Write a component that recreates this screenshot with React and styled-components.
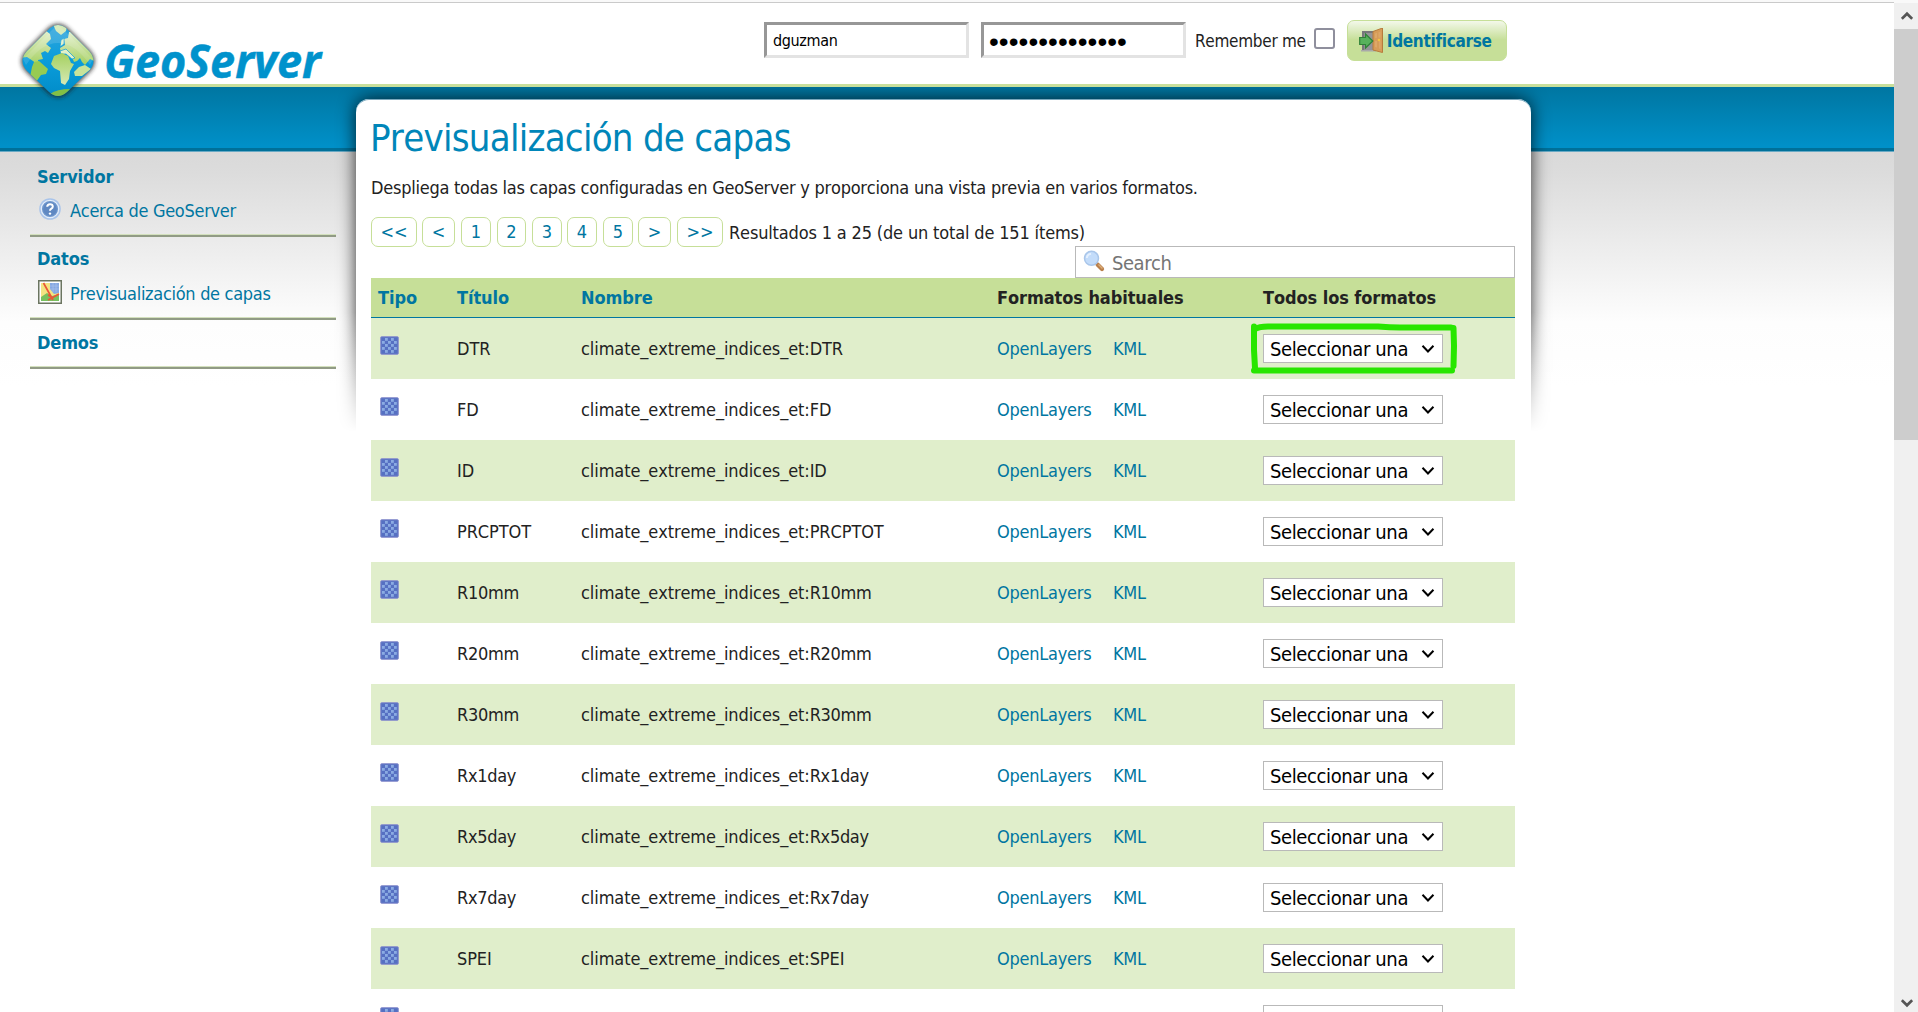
import React from "react";
import styled, { createGlobalStyle, css } from "styled-components";

const GlobalStyle = createGlobalStyle`
  *, *::before, *::after { box-sizing: border-box; }
  body {
    margin: 0;
    overflow: hidden;
    background: #fff;
    color: #222;
    font: 18px/24px "DejaVu Sans Condensed", "Noto Sans", sans-serif;
    font-kerning: none;
    font-variant-ligatures: none;
  }
`;

const Page = styled.div`
  display: flex;
  width: 1918px;
  height: 1012px;
  overflow: hidden;
  background: #f9f9f9;
  padding-top: 2px;
`;

const Main = styled.div`
  flex: 1;
  display: flex;
  flex-direction: column;
  border-top: 1px solid #cacaca;
  background: #fff;
`;

const Header = styled.header`
  flex: none;
  display: flex;
  align-items: flex-start;
  height: 84px;
  border-bottom: 3px solid #c8df9b;
`;

const Logo = styled.svg`
  flex: none;
  position: relative;
  z-index: 1;
  width: 764px;
  height: 100px;
  overflow: visible;
`;

const LoginForm = styled.form`
  display: flex;
  align-items: center;
  height: 41px;
  margin-top: 17px;
`;

const Field = styled.div`
  width: 205px;
  height: 36px;
  margin: 0 12px 1px 0;
  padding: 0 6px;
  border: 3px solid;
  border-color: #979797 #e3e3e3 #e3e3e3 #979797;
  background: #fff;
  color: #000;
  font-size: 16px;
  line-height: 31px;
  letter-spacing: -0.35px;
  overflow: hidden;
  white-space: nowrap;
  ${(p) => p.$masked && css`
    font-family: "Liberation Sans", sans-serif;
    font-size: 28px;
    line-height: 33px;
    letter-spacing: 0.05px;
    margin-right: 9px;
    padding-left: 5px;
  `}
`;

const Remember = styled.label`
  display: flex;
  align-items: center;
  font-size: 17px;
  letter-spacing: -0.28px;
`;

const Check = styled.span`
  width: 21px;
  height: 21px;
  margin: 0 12px 4px 8px;
  border: 2px solid #8f8f9d;
  border-radius: 3px;
  background: #fff;
`;

const LoginButton = styled.div`
  display: flex;
  align-items: center;
  width: 160px;
  height: 41px;
  padding-left: 11px;
  gap: 3px;
  border: 1px solid #c6df98;
  border-radius: 7px;
  background: linear-gradient(#f3f8ea, #c6df98 48%);
  color: #0076a1;
  font-size: 17px;
  font-weight: 700;
  letter-spacing: -0.3px;
`;

const Body = styled.div`
  flex: 1;
  display: grid;
  grid-template-columns: 356px 1175px 1fr;
  background: linear-gradient(
      #0076a1 0, #0090c8 59px, #0090c8 61px, #007099 61px, #007099 64px,
      #69a9c4 64px, #69a9c4 65px, #d9d9d9 65px, #dcdcdc 86px, #fdfdfd 235px, #fff 300px
    );
`;

const Sidebar = styled.nav`
  padding: 68px 20px 0 30px;
`;

const Section = styled.section`
  padding: ${(p) => p.$top}px 0 12px 7px;
  border-bottom: 2px solid #919b85;
  box-shadow: inset 0 -1px #d3e0bd;
`;

const SectionTitle = styled.h3`
  margin: 0;
  color: #0076a1;
  font-size: 18px;
  line-height: 24px;
  font-weight: 700;
  letter-spacing: -0.15px;
`;

const MenuLink = styled.div`
  display: grid;
  grid-template-columns: 24px 1fr;
  column-gap: 9px;
  align-items: center;
  height: 24px;
  margin-top: ${(p) => p.$gap}px;
  color: #0076a1;
  letter-spacing: -0.3px;
  white-space: nowrap;

  svg { margin: -5px 0 0 1px; }
`;

const Panel = styled.main`
  position: relative;
  margin-top: 12px;
  padding: 16px 16px 0 15px;
`;

const Backdrop = styled.div`
  position: absolute;
  top: -12px;
  left: -24px;
  right: -24px;
  height: 356px;
  padding: 12px 24px 0;
  overflow: hidden;
  mask-image: linear-gradient(#000 225px, transparent 345px);
`;

const BackdropCard = styled.div`
  height: 420px;
  border-radius: 13px 13px 0 0;
  box-shadow: 0 0 18px rgba(0, 0, 0, 0.8);
`;

const Surface = styled.div`
  position: absolute;
  inset: 0;
  border-radius: 13px 13px 0 0;
  background: #fff;
  box-shadow: inset 0 1px #7aa8bd;
`;

const Content = styled.div`
  position: relative;
`;

const Title = styled.h1`
  margin: 0 0 0 -1px;
  color: #0086b9;
  font-size: 38px;
  line-height: 46px;
  font-weight: 400;
  letter-spacing: -0.74px;
`;

const Intro = styled.p`
  margin: 15px 0 17px;
  letter-spacing: -0.25px;
`;

const Pager = styled.div`
  display: flex;
  align-items: center;
  height: 30px;
  letter-spacing: -0.16px;
`;

const PageLink = styled.span`
  display: flex;
  align-items: center;
  justify-content: center;
  width: ${(p) => p.$w}px;
  height: 30px;
  margin-right: ${(p) => p.$gap}px;
  border: 1px solid #c6df98;
  border-radius: 7px;
  color: #0076a1;
  letter-spacing: 0;
`;

const Summary = styled.span`
  padding-top: 1px;
`;

const SearchBox = styled.div`
  display: flex;
  align-items: center;
  gap: 7px;
  width: 440px;
  height: 32px;
  margin: -1px 0 0 auto;
  padding: 1px 0 0 7px;
  border: 1px solid #b9b9b9;
  background: #fff;
  color: #757575;
  font-size: 20px;
  letter-spacing: -0.45px;

  svg { margin-top: -3px; }
`;

const rowGrid = css`
  display: grid;
  grid-template-columns: 79px 124px 416px 116px 150px 1fr;
  align-items: center;
  padding-left: 7px;
`;

const HeadRow = styled.div`
  ${rowGrid}
  height: 40px;
  background: #c6df98;
  border-bottom: 1px solid #0076a1;
  font-weight: 700;
  letter-spacing: -0.08px;
`;

const HeadCell = styled.div`
  color: ${(p) => (p.$link ? "#0076a1" : "#222")};
  grid-column: span ${(p) => p.$span || 1};
`;

const Row = styled.div`
  ${rowGrid}
  height: 61px;
  background: ${(p) => (p.$shaded ? "#e0eecb" : "#fff")};
  letter-spacing: -0.09px;
`;

const TypeCell = styled.div`
  display: flex;
  height: 26px;
  padding-left: 2px;
`;

const LayerName = styled.span`
  letter-spacing: ${(p) => (p.$tight ? "-0.3px" : "inherit")};
`;

const Link = styled.span`
  color: #0076a1;
  letter-spacing: -0.25px;
`;

const SelectWrap = styled.div`
  position: relative;
  width: 180px;
`;

const Select = styled.div`
  display: flex;
  align-items: center;
  justify-content: flex-end;
  gap: 13px;
  height: 29px;
  padding: 0 7px 0 6px;
  border: 1px solid #b9b9b9;
  background: #fff;
  color: #000;
  font-size: 20px;
  letter-spacing: -0.38px;
  white-space: nowrap;
`;

const Marker = styled.svg`
  position: absolute;
  left: -13px;
  top: -12px;
  width: 208px;
  height: 52px;
`;

const Scrollbar = styled.aside`
  display: flex;
  flex-direction: column;
  width: 24px;
  margin-top: 1px;
  background: #f0f0f0;
`;

const ScrollArrow = styled.div`
  display: flex;
  align-items: center;
  justify-content: center;
  height: 26px;
  padding-left: 1px;

  svg { transform: ${(p) => (p.$down ? "translateY(4px) scaleY(-1)" : "none")}; }
`;

const Thumb = styled.div`
  height: 411px;
  margin-bottom: auto;
  background: #cdcdcd;
`;

function GeoServerLogo() {
  return (
    <Logo viewBox="0 3 764 100" role="img" aria-label="GeoServer">
      <defs>
        <clipPath id="gem">
          <path d="M50 28 Q58 22 66 28 L89 51 Q98 61 89 71 L67 92 Q58 100 49 92 L27 71 Q18 61 27 51 Z" />
        </clipPath>
        <linearGradient id="sea" x1="0" y1="0" x2="0" y2="1">
          <stop offset="0" stopColor="#35a5dc" />
          <stop offset="0.5" stopColor="#0b9ddb" />
          <stop offset="1" stopColor="#008ac7" />
        </linearGradient>
        <linearGradient id="land" x1="0" y1="0" x2="0" y2="1">
          <stop offset="0" stopColor="#e3f0cf" />
          <stop offset="0.55" stopColor="#c2de92" />
          <stop offset="1" stopColor="#a3d05e" />
        </linearGradient>
        <linearGradient id="africa" x1="0" y1="0" x2="0" y2="1">
          <stop offset="0" stopColor="#a5d05f" />
          <stop offset="1" stopColor="#d6e9b5" />
        </linearGradient>
        <filter id="soft" x="-20%" y="-20%" width="140%" height="140%">
          <feGaussianBlur stdDeviation="2.2" />
        </filter>
      </defs>
      <path
        d="M50 28 Q58 22 66 28 L89 51 Q98 61 89 71 L67 92 Q58 100 49 92 L27 71 Q18 61 27 51 Z"
        fill="#222" stroke="#222" strokeWidth="2.5" opacity=".8" filter="url(#soft)"
      />
      <g clipPath="url(#gem)">
        <rect x="20" y="20" width="78" height="80" fill="url(#sea)" />
        <path d="M20 58 L45 30 L50 34 L51 39 L46 44 L51 48 L48 53 L45 51 L41 53 L43 59 L38 60 L39 66 L33 61 L27 57 Z" fill="url(#land)" />
        <path d="M34 62 L39 61 L48 69 L46 74 L41 75 L36 82 L30 77 L32 67 Z" fill="#97cb52" />
        <path d="M53 24 L67 26 L66 31 L61 35 L56 31 Z" fill="#d3e9b4" />
        <path d="M69 32 L73 32 L97 56 L94 61 L90 59 L85 65 L82 62 L80 58 L77 61 L74 62 L71 55 L65 53 L61 54 L60 48 L65 45 L64 39 L68 38 Z" fill="url(#land)" />
        <path d="M61 40 L64 38 L64 44 L60 47 Z M60 51 L66 49 L70 53 L75 58 L72 59 L66 54 L61 54 Z" fill="#e1f0c8" stroke="#0b9ddb" strokeWidth=".7" />
        <path d="M54 56 L62 53 L68 56 L71 63 L74 64 L70 71 L69 79 L65 85 L61 83 L60 71 L54 68 L51 64 Z" fill="url(#africa)" />
        <path d="M74 72 L79 67 L85 65 L91 69 L82 76 L75 76 Z" fill="#c8e39a" />
        <path d="M50 94 Q57 89 70 89 L65 98 L52 99 Z" fill="#83bf45" />
        <path d="M58 24 L93 59 L90 65 Q75 43 58 43 Q41 43 26 65 L23 59 Z" fill="#fff" opacity=".13" />
      </g>
      <text
        x="104" y="78" fill="#0092cc" stroke="#0092cc" strokeWidth=".5"
        fontFamily="'Open Sans', sans-serif" fontSize="47" fontWeight="700" fontStyle="italic"
        textLength="217" lengthAdjust="spacingAndGlyphs"
      >GeoServer</text>
    </Logo>
  );
}

function DoorIcon() {
  return (
    <svg width="25" height="25" viewBox="0 0 25 25">
      <path d="M3 3h13v19H3z" fill="#77777b" />
      <path d="M5 5h10v17H5z" fill="#949498" />
      <path d="M2 22h15v1.500H2z" fill="#a9a9a9" />
      <path d="M14 3.500 23.500 0v24.500L14 22z" fill="#d79c58" stroke="#b77b3c" />
      <path d="M16 5.500l2-.7v5l-2 .4zM19.500 4.200l2-.8v6l-2 .4zM16 13h2v6.500l-2-.4zM20 13h1.500v8l-1.500-.5z" fill="#dda768" />
      <circle cx="20" cy="12" r="1.300" fill="#f3c443" />
      <path d="M.7 9.500h5.800V6l7.300 7-7.300 7v-3.500H.7z" fill="#57b15c" stroke="#2f8238" strokeWidth="1.200" />
    </svg>
  );
}

function HelpIcon() {
  return (
    <svg width="24" height="24" viewBox="0 0 24 24">
      <circle cx="12" cy="12" r="10.800" fill="#a9c4ea" />
      <circle cx="12" cy="12" r="8.700" fill="#6f97cd" stroke="#e3edfa" strokeWidth="1.300" />
      <circle cx="12" cy="12" r="6.800" fill="#5f88c2" />
      <path d="M9.200 9.800Q9.300 7.200 12 7.200q2.800 0 2.800 2.400 0 1.300-1.400 2.100Q12 12.500 12 13.800" fill="none" stroke="#fff" strokeWidth="2" />
      <circle cx="12" cy="16.600" r="1.200" fill="#fff" />
    </svg>
  );
}

function MapIcon() {
  return (
    <svg width="24" height="24" viewBox="0 0 24 24">
      <rect x=".75" y=".75" width="22.500" height="22.500" fill="#fff" stroke="#6b7561" strokeWidth="1.500" />
      <path d="M3 3h18v18H3z" fill="#f3e483" />
      <path d="M12 3h9v10l-5 1-4-5z" fill="#86a8e2" />
      <path d="M12 6h9M12 9h9M15 3v9M18 3v9" stroke="#a9c1ec" strokeWidth=".7" />
      <path d="M3 17l6-4 5 3 7-2v7H3z" fill="#77c05f" />
      <path d="M5.500 3 15 20M10 20l11-6M10 15l5 3" fill="none" stroke="#ea5637" strokeWidth="1.700" />
    </svg>
  );
}

function SearchIcon() {
  return (
    <svg width="22" height="22" viewBox="0 0 22 22">
      <path d="M14.500 14.500l4.500 4.500" stroke="#b97f4b" strokeWidth="4.200" strokeLinecap="round" />
      <path d="M15.500 14.500l4 4" stroke="#dcae79" strokeWidth="1.500" />
      <circle cx="8.500" cy="8.300" r="7" fill="#c3dcfa" stroke="#a9c6ea" strokeWidth="1.500" />
      <path d="M3.800 8Q4.200 4.200 8 3.700" fill="none" stroke="#e4f0fe" strokeWidth="2" />
    </svg>
  );
}

function RasterIcon() {
  const cells = [];
  for (let y = 0; y < 5; y++)
    for (let x = 0; x < 5; x++)
      if ((x + y) % 2) cells.push(<rect key={`${x}-${y}`} x={2 + x * 3} y={2 + y * 3} width="2.8" height="2.8" />);
  return (
    <svg width="19" height="19" viewBox="0 0 19 19">
      <rect x=".7" y=".7" width="17.600" height="17.600" rx=".8" fill="#5670c2" stroke="#8a90cd" />
      <g fill="#8babe3">{cells}</g>
    </svg>
  );
}

function Chevron() {
  return (
    <svg width="14" height="10" viewBox="0 0 14 10">
      <path d="M1.500 1.800 7 7.500l5.500-5.700" fill="none" stroke="#000" strokeWidth="2" />
    </svg>
  );
}

function ArrowGlyph() {
  return (
    <svg width="12" height="12" viewBox="0 0 12 12">
      <path d="M.8 8.800 6 3.800l5.200 5" fill="none" stroke="#555" strokeWidth="2.800" />
    </svg>
  );
}

const pages = [
  ["<<", 46, 5], ["<", 33, 6], ["1", 30, 6], ["2", 29, 6], ["3", 30, 5],
  ["4", 30, 6], ["5", 30, 5], [">", 33, 6], [">>", 46, 6],
];

const layers = [
  "DTR", "FD", "ID", "PRCPTOT", "R10mm", "R20mm", "R30mm", "Rx1day", "Rx5day", "Rx7day", "SPEI",
];

export default function App() {
  return (
    <Page>
      <GlobalStyle />
      <Main>
        <Header>
          <GeoServerLogo />
          <LoginForm>
            <Field>dguzman</Field>
            <Field $masked>••••••••••••••</Field>
            <Remember>
              Remember me
              <Check />
            </Remember>
            <LoginButton>
              <DoorIcon />
              Identificarse
            </LoginButton>
          </LoginForm>
        </Header>
        <Body>
          <Sidebar>
            <Section $top={10}>
              <SectionTitle>Servidor</SectionTitle>
              <MenuLink $gap={10}><HelpIcon />Acerca de GeoServer</MenuLink>
            </Section>
            <Section $top={10}>
              <SectionTitle>Datos</SectionTitle>
              <MenuLink $gap={11}><MapIcon />Previsualización de capas</MenuLink>
            </Section>
            <Section $top={11}>
              <SectionTitle>Demos</SectionTitle>
            </Section>
          </Sidebar>
          <Panel>
            <Backdrop><BackdropCard /></Backdrop>
            <Surface />
            <Content>
              <Title>Previsualización de capas</Title>
              <Intro>
                Despliega todas las capas configuradas en GeoServer y proporciona una vista previa en varios formatos.
              </Intro>
              <Pager>
                {pages.map(([label, w, gap]) => (
                  <PageLink key={label} $w={w} $gap={gap}>{label}</PageLink>
                ))}
                <Summary>Resultados 1 a 25 (de un total de 151 ítems)</Summary>
              </Pager>
              <SearchBox><SearchIcon />Search</SearchBox>
              <HeadRow>
                <HeadCell $link>Tipo</HeadCell>
                <HeadCell $link>Título</HeadCell>
                <HeadCell $link>Nombre</HeadCell>
                <HeadCell $span={2}>Formatos habituales</HeadCell>
                <HeadCell>Todos los formatos</HeadCell>
              </HeadRow>
              {layers.map((name, i) => (
                <Row key={name} $shaded={i % 2 === 0}>
                  <TypeCell><RasterIcon /></TypeCell>
                  <LayerName $tight={/^R/.test(name)}>{name}</LayerName>
                  <LayerName $tight={false}>
                    climate_extreme_indices_et:<LayerName $tight={/^R/.test(name)}>{name}</LayerName>
                  </LayerName>
                  <Link>OpenLayers</Link>
                  <Link>KML</Link>
                  <SelectWrap>
                    <Select>Seleccionar una<Chevron /></Select>
                    {i === 0 && (
                      <Marker viewBox="0 0 208 52" fill="none" stroke="#28e600" strokeWidth="6" strokeLinecap="round" strokeLinejoin="round">
                        <path d="M4 4.500 4 28 5 46" />
                        <path d="M5 7 Q9 4.500 18 4.500 H128 Q140 5.500 150 5.500 H201" />
                        <path d="M203.500 6 204 24 203.500 44" />
                        <path d="M4 48.500 H202" />
                      </Marker>
                    )}
                  </SelectWrap>
                </Row>
              ))}
              <Row>
                <TypeCell><RasterIcon /></TypeCell>
                <span />
                <span />
                <span />
                <span />
                <SelectWrap><Select /></SelectWrap>
              </Row>
            </Content>
          </Panel>
        </Body>
      </Main>
      <Scrollbar>
        <ScrollArrow><ArrowGlyph /></ScrollArrow>
        <Thumb />
        <ScrollArrow $down><ArrowGlyph /></ScrollArrow>
      </Scrollbar>
    </Page>
  );
}
